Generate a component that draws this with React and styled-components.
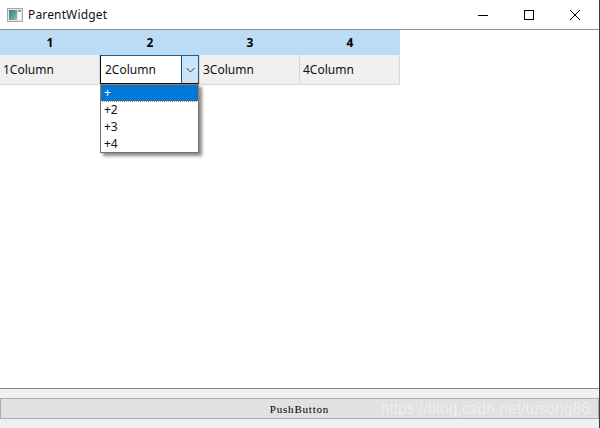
import React from "react";
import styled, { createGlobalStyle } from "styled-components";

const Global = createGlobalStyle`
  html, body { margin: 0; padding: 0; background: #fff; }
  #root { width: 600px; height: 428px; overflow: hidden; }
`;
const Window = styled.div`
  position: relative;
  width: 600px;
  height: 428px;
  box-sizing: border-box;
  display: flex;
  flex-direction: column;
  border-right: 1px solid #3c3c3c;
  font-family: "Noto Sans", "Open Sans", sans-serif;
  font-size: 12px;
  color: #111;
  background: #fff;
`;
const TitleBar = styled.div`
  height: 29px;
  display: flex;
  align-items: center;
  background: #fff;
  border-bottom: 1px solid #8a8e96;
  flex: none;
`;
const AppIcon = styled.svg`
  margin-left: 7px;
  width: 16px;
  height: 16px;
  flex: none;
`;
const Title = styled.span`
  margin-left: 5px;
  font-size: 12px;
  letter-spacing: 0.15px;
  flex: 1;
`;
const WinButton = styled.button`
  width: 46px;
  height: 29px;
  padding: 0;
  border: 0;
  background: transparent;
  display: flex;
  align-items: center;
  justify-content: center;
`;
const Controls = styled.div`
  display: flex;
  margin-right: 1px;
`;
const Content = styled.div`
  flex: 1;
  min-height: 0;
  background: #fff;
`;
const Table = styled.div`
  width: 400px;
  display: grid;
  grid-template-columns: repeat(4, 100px);
`;
const HeadCell = styled.div`
  height: 25px;
  background: #bbdcf4;
  display: flex;
  align-items: center;
  justify-content: center;
  font-weight: 700;
  font-size: 12px;
  color: #000;
`;
const Cell = styled.div`
  position: relative;
  height: 30px;
  box-sizing: border-box;
  background: #f0f0f0;
  border-bottom: 1px solid #d8d8d8;
  border-right: 1px solid #d8d8d8;
  display: flex;
  align-items: center;
  padding-left: 3px;
  font-size: 12px;
`;
const Combo = styled.div`
  position: absolute;
  left: 0;
  top: 0;
  width: 99px;
  height: 29px;
  box-sizing: border-box;
  display: flex;
  background: #fff;
  border: 1px solid #0f0f0f;
  border-right-color: #1a5f96;
  border-top-color: #1a5f96;
`;
const ComboText = styled.span`
  flex: 1;
  padding-left: 4px;
  line-height: 27px;
`;
const ComboArrow = styled.div`
  width: 16px;
  background: #cce4f7;
  border-left: 1px solid #005499;
  display: flex;
  align-items: center;
  justify-content: center;
`;
const Popup = styled.div`
  position: absolute;
  left: 0;
  top: 29px;
  width: 99px;
  height: 69px;
  box-sizing: border-box;
  background: #fff;
  border: 1px solid #707070;
  box-shadow: 3px 3px 3px rgba(0, 0, 0, 0.45);
  z-index: 3;
`;
const Option = styled.div`
  height: ${(p) => (p.$active ? "16px" : "17px")};
  line-height: ${(p) => (p.$active ? "16px" : "17px")};
  padding-left: 3px;
  box-sizing: border-box;
  color: ${(p) => (p.$active ? "#fff" : "#111")};
  background: ${(p) => (p.$active ? "#0078d7" : "#fff")};
  outline: ${(p) => (p.$active ? "1px dotted #f08020" : "none")};
`;
const Footer = styled.div`
  flex: none;
  height: 30px;
  background: #f0f0f0;
  border-top: 1px solid #85888e;
  padding-top: 9px;
`;
const PushButton = styled.div`
  height: 21px;
  box-sizing: border-box;
  background: #e1e1e1;
  border: 1px solid #adadad;
  display: flex;
  align-items: center;
  justify-content: center;
  font-family: "Liberation Serif", serif;
  font-size: 11px;
  letter-spacing: 0.8px;
  color: #000;
`;
const Watermark = styled.span`
  position: absolute;
  right: 9px;
  bottom: 9px;
  font-family: "Liberation Sans", sans-serif;
  font-size: 15.7px;
  line-height: 20px;
  color: rgba(255, 255, 255, 0.62);
  text-shadow: 0 0 1px rgba(205, 205, 205, 0.5);
`;

export default function App() {
  return (
    <Window>
      <Global />
      <TitleBar>
        <AppIcon viewBox="0 0 16 16">
          <defs>
            <linearGradient id="pic" x1="0" y1="0" x2="1" y2="1">
              <stop offset="0" stopColor="#5c6f80" />
              <stop offset="0.55" stopColor="#5f9f96" />
              <stop offset="1" stopColor="#9cc4b8" />
            </linearGradient>
          </defs>
          <rect x="0.5" y="1.5" width="15" height="13" fill="#e6e6e6" stroke="#a6a6a6" />
          <rect x="2" y="3" width="8" height="10" fill="url(#pic)" />
          <rect x="11" y="3" width="3" height="10" fill="#fafafa" />
          <rect x="11" y="3" width="3" height="2" fill="#8aa0a8" />
        </AppIcon>
        <Title>ParentWidget</Title>
        <Controls>
          <WinButton>
            <svg width="12" height="12" viewBox="0 0 12 12"><path d="M1 6.5h10" stroke="#000" /></svg>
          </WinButton>
          <WinButton>
            <svg width="12" height="12" viewBox="0 0 12 12"><rect x="1.5" y="1.5" width="9" height="9" fill="none" stroke="#000" /></svg>
          </WinButton>
          <WinButton>
            <svg width="12" height="12" viewBox="0 0 12 12"><path d="M1 1l10 10M11 1L1 11" stroke="#000" /></svg>
          </WinButton>
        </Controls>
      </TitleBar>
      <Content>
        <Table>
          <HeadCell>1</HeadCell>
          <HeadCell>2</HeadCell>
          <HeadCell>3</HeadCell>
          <HeadCell>4</HeadCell>
          <Cell>1Column</Cell>
          <Cell>
            <Combo>
              <ComboText>2Column</ComboText>
              <ComboArrow>
                <svg width="9" height="6" viewBox="0 0 9 6"><path d="M0.5 1l4 4 4-4" fill="none" stroke="#444" /></svg>
              </ComboArrow>
            </Combo>
            <Popup>
              <Option $active>+</Option>
              <Option>+2</Option>
              <Option>+3</Option>
              <Option>+4</Option>
            </Popup>
          </Cell>
          <Cell>3Column</Cell>
          <Cell>4Column</Cell>
        </Table>
      </Content>
      <Footer>
        <PushButton>PushButton</PushButton>
      </Footer>
      <Watermark>https://blog.csdn.net/tusong86</Watermark>
    </Window>
  );
}
